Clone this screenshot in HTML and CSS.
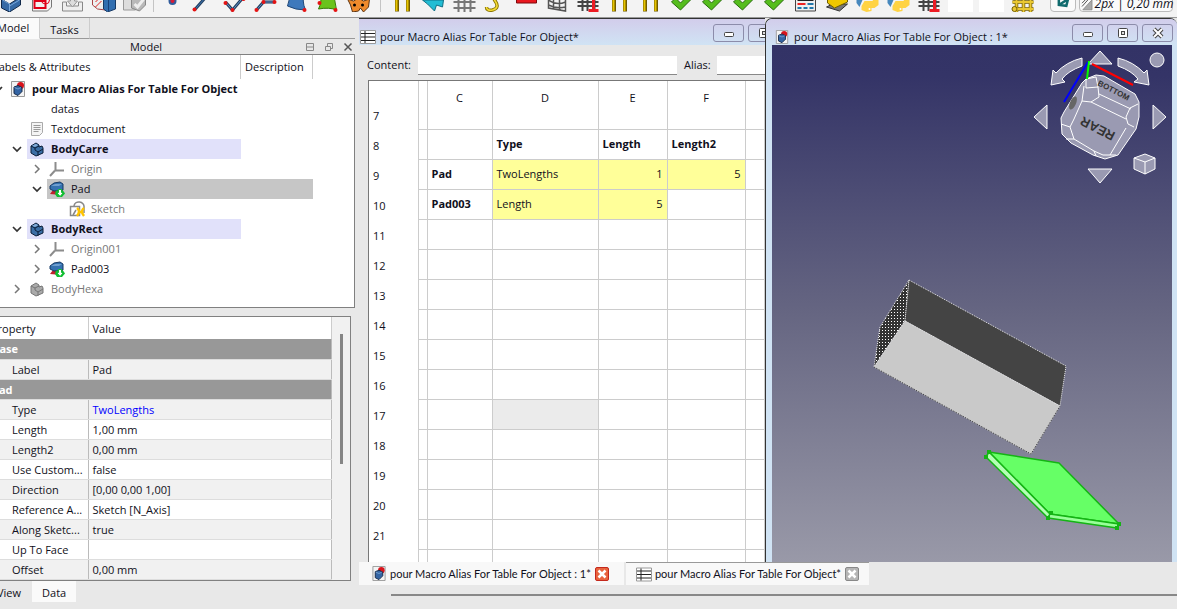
FILE: index.html
```html
<!DOCTYPE html>
<html lang="en">
<head>
<meta charset="utf-8">
<title>pour Macro Alias For Table For Object</title>
<link rel="stylesheet" href="styles.css">
</head>
<body>
<svg class="defs" aria-hidden="true">
  <symbol id="doc" viewBox="0 0 16 16"><path d="M1.500.5h13v15h-13z" fill="#f4f4f4" stroke="#999"/><circle cx="10.500" cy="4.500" r="3.500" fill="#d8141c"/><path d="M4 6l4-1.500 4 2v4l-4 4-4-2z" fill="#3465a4" stroke="#172a48"/><path d="M4.500 6.500l3.500 1.500 3-1.500" fill="none" stroke="#729fcf"/></symbol>
  <symbol id="sheet" viewBox="0 0 16 14"><path d="M.5.5h15v13H.5z" fill="#fff" stroke="#999"/><path d="M1 3.500h14M1 7h14M1 10.500h14M5 1v12" stroke="#222"/></symbol>
  <symbol id="body" viewBox="0 0 16 16"><path d="M2 5l5-3 3 2v2l3-1 1 2v5l-7 3-5-3z" fill="#3b6ea5" stroke="#0b1e38"/><path d="M2 5l4 2v2l3 2v4M9 11l5-3M6 7l4-2" fill="none" stroke="#0b1e38"/><path d="M3 4.800l4-2 2 1.500-3 1.700z" fill="#84acd8"/></symbol>
  <symbol id="bodygrey" viewBox="0 0 16 16"><path d="M2 5l5-3 3 2v2l3-1 1 2v5l-7 3-5-3z" fill="#aaa" stroke="#777"/><path d="M2 5l4 2v2l3 2v4M9 11l5-3M6 7l4-2" fill="none" stroke="#777"/></symbol>
  <symbol id="origin" viewBox="0 0 16 16"><path d="M6.500 1v8M6 9.500h9M6 9.500L1 15" fill="none" stroke="#8c8c8c" stroke-width="2"/></symbol>
  <symbol id="pad" viewBox="0 0 16 16"><path d="M1 13l3-4h10l-2 5z" fill="#c0202c"/><path d="M1 5l4-3 6-1 3 2v6l-9 1-4-2z" fill="#3572b0" stroke="#173a66"/><path d="M2 5l4-2 7 0-3 2z" fill="#6f9fd0"/><path d="M7 9.500h7l2 3-3 3.500H8l-2-3z" fill="#0fbe30"/><path d="M9.500 8.500h3v3h2l-3.400 4-3.600-4h2z" fill="#fff" stroke="#0fbe30"/></symbol>
  <symbol id="text" viewBox="0 0 16 16"><path d="M2.500 1.500h11v10l-3 3h-8z" fill="#f4f4f4" stroke="#aaa"/><path d="M4.500 4.500h7M4.500 6.500h7M4.500 8.500h7M4.500 10.500h5" stroke="#999"/></symbol>
  <symbol id="sketch" viewBox="0 0 16 16"><path d="M1.500 5.500h9v9h-9z" fill="none" stroke="#888" stroke-width="1.500"/><path d="M5 5a5 4.500 0 0 1 10 1v6M4 14l3-5" fill="none" stroke="#888" stroke-width="1.500"/><path d="M8 7q4 3 0 8M15 7q-4 3 0 8M10 11h4" fill="none" stroke="#ffc400" stroke-width="2.500"/></symbol>
  <symbol id="down" viewBox="0 0 10 10"><path d="M1 3l4 4 4-4" fill="none" stroke="#333" stroke-width="1.700"/></symbol>
  <symbol id="right" viewBox="0 0 10 10"><path d="M3 1l4 4-4 4" fill="none" stroke="#777" stroke-width="1.500"/></symbol>
  <symbol id="bars" viewBox="0 0 24 24"><path d="M6.500 0v23.500M17.500 0v23.500" stroke="#715b00" stroke-width="4"/><path d="M6 0v23M17 0v23" stroke="#e6c400" stroke-width="2"/></symbol>
  <symbol id="check" viewBox="0 0 24 24"><path d="M2 14l4-4 5 5L22 4v7L11 22z" fill="#55bd1d" stroke="#286b0c"/></symbol>
  <symbol id="python" viewBox="0 0 24 24"><path d="M1 4h14v8H7l-3 7-3-4z" fill="#4788bd"/><path d="M9 13h8l3-6 3 5v5l-4 3h-3v3l-5 1-5-2v-4z" fill="#ffd343"/><circle cx="14" cy="21" r="1" fill="#fff"/></symbol>
  <symbol id="gridred" viewBox="0 0 24 24"><path d="M1 14h21M1 18h21M6 5v18M11 5v18M18 5v18" stroke="#444" stroke-width="2"/><path d="M13 10h8M17 10v12M12 22.500h10" stroke="#ed1c24" stroke-width="3"/></symbol>
  <symbol id="min" viewBox="0 0 12 12"><rect x="1.500" y="5.500" width="9" height="4" rx="1" fill="#fff" stroke="#444"/></symbol>
  <symbol id="max" viewBox="0 0 12 12"><rect x="1.500" y="1.500" width="9" height="9" rx="1" fill="#fff" stroke="#444"/><rect x="4.500" y="4.500" width="3" height="3" fill="#ddd" stroke="#444"/></symbol>
  <symbol id="close" viewBox="0 0 12 12"><path d="M2 2l8 8M10 2l-8 8" stroke="#444" stroke-width="4"/><path d="M2 2l8 8M10 2l-8 8" stroke="#fff" stroke-width="2"/></symbol>
  <symbol id="tabx" viewBox="0 0 12 12"><path d="M2.500 2.500l7 7M9.500 2.500l-7 7" stroke="#fff" stroke-width="2.500"/></symbol>
</svg>

<div class="app">
  <header class="toolbar">
    <div class="group">
      <svg viewBox="0 0 24 24"><path d="M3 11l8 5 11-7v8l-11 7-8-4z" fill="#3569a5" stroke="#10294a"/><path d="M4 12l7 4v7M11 18l10-6" fill="none" stroke="#78a8dc"/></svg>
      <svg viewBox="0 0 24 24"><path d="M3 2h19v17l-4 4H3z" fill="#f2f2f2" stroke="#777"/><path d="M5 8h11v12H5zM5 13h11M12 4v7" fill="none" stroke="#e00018" stroke-width="2"/><circle cx="16" cy="12" r="4" fill="none" stroke="#e00018"/></svg>
      <svg viewBox="0 0 24 24"><path d="M2 14h4v4h12v-4h4v9H2z" fill="#eee" stroke="#888"/><path d="M12 19l-5-6h3V7h4v6h3z" fill="#ddd" stroke="#999"/></svg>
      <svg viewBox="0 0 24 24"><path d="M1 4h13v18l-8-1-5-4z" fill="#eee" stroke="#a44"/><path d="M4 14l5-5M4 19l6-6" stroke="#d22"/><path d="M12 9l6-3 6 3v12l-8 3-4-3z" fill="#316eb0" stroke="#173a66"/><path d="M17 8v15" stroke="#17407a"/></svg>
      <svg viewBox="0 0 24 24"><path d="M1 7h12v15H1z" fill="#ddd" stroke="#999"/><path d="M9 9l14-1v9l-6 6-8-3z" fill="#b9b9b9" stroke="#888"/><path d="M12 16l3 3 7-9" fill="none" stroke="#eee" stroke-width="3"/></svg>
    </div>
    <div class="group">
      <svg viewBox="0 0 24 24"><circle cx="12" cy="13" r="3" fill="#d81b35" stroke="#315c9c" stroke-width="2"/></svg>
      <svg viewBox="0 0 24 24"><path d="M3 22L17 6" stroke="#243f60" stroke-width="3"/><path d="M3 22L17 6" stroke="#3c79b8"/><circle cx="3" cy="21.500" r="2" fill="#e51313"/></svg>
      <svg viewBox="0 0 24 24"><path d="M3 14l7 8L21 9" fill="none" stroke="#243f60" stroke-width="3"/><path d="M3 14l7 8L21 9" fill="none" stroke="#5f93c8"/><circle cx="3" cy="15" r="2" fill="#e51313"/><circle cx="10" cy="22" r="2" fill="#e51313"/><circle cx="21" cy="11" r="2" fill="#e51313"/></svg>
      <svg viewBox="0 0 24 24"><path d="M3 22l7-8h11" fill="none" stroke="#243f60" stroke-width="3"/><path d="M3 22l7-8h11" fill="none" stroke="#5f93c8"/><circle cx="3" cy="22" r="2" fill="#e51313"/><circle cx="10" cy="14" r="2" fill="#e51313"/><circle cx="21" cy="14" r="2" fill="#e51313"/></svg>
      <svg viewBox="0 0 24 24"><path d="M4 4h16q-3 9 1 18-10 0-18-4 3-6 1-14z" fill="#3e79bc" stroke="#1e4778"/><circle cx="20" cy="22" r="2" fill="#e51313"/></svg>
      <svg viewBox="0 0 24 24"><path d="M6 3h14q-2 9 1 19-7-3-18-1 3-6 3-18z" fill="#6ac31c" stroke="#367a09"/><circle cx="20" cy="22" r="2" fill="#e51313"/><circle cx="4" cy="15" r="2" fill="#e51313"/></svg>
      <svg viewBox="0 0 24 24"><path d="M1 11l6 2 5-3 5 3 6-2-1 8-5 5-3-4-2 3-6 1-2-7z" fill="#ee8a2c" stroke="#5d3412"/><circle cx="8" cy="17" r="1.500"/><circle cx="16" cy="17" r="1.500"/></svg>
    </div>
    <div class="group">
      <svg><use href="#bars"/></svg>
      <svg viewBox="0 0 24 24"><path d="M1 12h21l-1 7-6-2-2 6-4-4-3-3z" fill="#22bdd4" stroke="#107085"/></svg>
      <svg viewBox="0 0 24 24"><path d="M1 14h22M1 20h22M6 6v18M12 6v18M18 6v18" stroke="#777" stroke-width="2"/></svg>
      <svg viewBox="0 0 24 24"><path d="M19 5q-10-1-8 7 6 8-2 10-6 1-6-3" fill="none" stroke="#8b7600" stroke-width="3.500"/><path d="M19 5q-10-1-8 7 6 8-2 10-6 1-6-3" fill="none" stroke="#f5dc35" stroke-width="1.500"/></svg>
      <svg viewBox="0 0 24 24"><path d="M2 6h20v9H2z" fill="#e9181e" stroke="#7c080c"/></svg>
      <svg viewBox="0 0 24 24"><path d="M3 5v15l17 3V8M3 12q8 6 17 2M3 17q8 4 17 2M8 6v15M14 8v14" fill="none" stroke="#555" stroke-width="1.500"/></svg>
      <svg><use href="#gridred"/></svg>
      <svg><use href="#bars"/></svg>
      <svg><use href="#bars"/></svg>
      <svg><use href="#check"/></svg>
      <svg><use href="#check"/></svg>
      <svg><use href="#check"/></svg>
      <svg><use href="#check"/></svg>
      <svg viewBox="0 0 24 24"><path d="M2 3h20v20H2z" fill="#eee" stroke="#444"/><path d="M4 12h16" stroke="#222" stroke-width="2"/><path d="M4 16h8" stroke="#e22" stroke-width="2"/><path d="M14 16h6" stroke="#27a" stroke-width="2"/><path d="M4 20h16" stroke="#27a" stroke-width="2" stroke-dasharray="4 2"/></svg>
      <svg viewBox="0 0 24 24"><path d="M2 19l6-3h15l-8 7z" fill="#777" stroke="#333"/><path d="M3 15l7 5 13-6V9H3z" fill="#f0c800" stroke="#705f00"/></svg>
      <svg><use href="#python"/></svg>
      <svg><use href="#python"/></svg>
      <svg><use href="#gridred"/></svg>
      <i class="blank"></i>
      <i class="blank"></i>
      <svg viewBox="0 0 24 24"><path d="M2 14h21M2 21h21M6 9v15M13 9v15M20 9v15" stroke="#776000" stroke-width="3.500"/><path d="M2 14h21M2 21h21M6 9v15M13 9v15M20 9v15" stroke="#eac832" stroke-width="2"/><circle cx="4" cy="21" r="2.500" fill="#eac832" stroke="#776000"/></svg>
    </div>
    <button class="tool" aria-label="Plane"><svg viewBox="0 0 24 24"><path d="M7 18l11-7M7 7v11l9 1 2-8" fill="none" stroke="#116b6e" stroke-width="3"/></svg></button>
    <button class="tool pen"><svg viewBox="0 0 16 24"><path d="M3 19h11V7z" fill="#aaa" stroke="#888"/><path d="M2 15l8-9M2 11l6-6" stroke="#333"/></svg>2px | 0,20 mm</button>
  </header>

  <div class="main">
    <aside class="dock">
      <div class="tabs"><button class="tab on">Model</button><button class="tab">Tasks</button></div>
      <div class="dock-title"><span>Model</span>
        <button aria-label="Dock"><svg viewBox="0 0 10 10"><path d="M1.500 1.500h7v7h-7zM1 5h8" fill="none" stroke="#888"/></svg></button>
        <button aria-label="Float"><svg viewBox="0 0 10 10"><path d="M1.500 4.500h5v4h-5zM3.500 4V1.500h5v5H7" fill="none" stroke="#888"/></svg></button>
        <button aria-label="Close"><svg viewBox="0 0 10 10"><path d="M1.500 1.500l7 7M8.500 1.500l-7 7" stroke="#555" stroke-width="1.500"/></svg></button>
      </div>
      <div class="tree">
        <div class="tree-head"><span>Labels &amp; Attributes</span><span>Description</span></div>
        <ul>
          <li class="l0"><button aria-label="Collapse"><svg><use href="#down"/></svg></button><svg class="ico"><use href="#doc"/></svg><b>pour Macro Alias For Table For Object</b></li>
          <li class="l1"><i class="ico"></i><span>datas</span></li>
          <li class="l1"><svg class="ico"><use href="#text"/></svg><span>Textdocument</span></li>
          <li class="l1"><button aria-label="Collapse"><svg><use href="#down"/></svg></button><div class="hl"><svg class="ico"><use href="#body"/></svg><b>BodyCarre</b></div></li>
          <li class="l2 dim"><button aria-label="Expand"><svg><use href="#right"/></svg></button><svg class="ico"><use href="#origin"/></svg><span>Origin</span></li>
          <li class="l2"><button aria-label="Collapse"><svg><use href="#down"/></svg></button><div class="sel"><svg class="ico"><use href="#pad"/></svg><span>Pad</span></div></li>
          <li class="l3 dim"><svg class="ico"><use href="#sketch"/></svg><span>Sketch</span></li>
          <li class="l1"><button aria-label="Collapse"><svg><use href="#down"/></svg></button><div class="hl"><svg class="ico"><use href="#body"/></svg><b>BodyRect</b></div></li>
          <li class="l2 dim"><button aria-label="Expand"><svg><use href="#right"/></svg></button><svg class="ico"><use href="#origin"/></svg><span>Origin001</span></li>
          <li class="l2"><button aria-label="Expand"><svg><use href="#right"/></svg></button><svg class="ico"><use href="#pad"/></svg><span>Pad003</span></li>
          <li class="l1 dim"><button aria-label="Expand"><svg><use href="#right"/></svg></button><svg class="ico"><use href="#bodygrey"/></svg><span>BodyHexa</span></li>
        </ul>
      </div>
      <div class="props">
        <table>
          <colgroup><col class="c-name"><col></colgroup>
          <thead><tr><th>Property</th><th>Value</th></tr></thead>
          <tbody>
            <tr class="grp"><td colspan="2">Base</td></tr>
            <tr class="alt"><td>Label</td><td>Pad</td></tr>
            <tr class="grp"><td colspan="2">Pad</td></tr>
            <tr class="alt"><td>Type</td><td class="blue">TwoLengths</td></tr>
            <tr><td>Length</td><td>1,00 mm</td></tr>
            <tr class="alt"><td>Length2</td><td>0,00 mm</td></tr>
            <tr><td>Use Custom...</td><td>false</td></tr>
            <tr class="alt"><td>Direction</td><td>[0,00 0,00 1,00]</td></tr>
            <tr><td>Reference A...</td><td>Sketch [N_Axis]</td></tr>
            <tr class="alt"><td>Along Sketc...</td><td>true</td></tr>
            <tr><td>Up To Face</td><td></td></tr>
            <tr class="alt"><td>Offset</td><td>0,00 mm</td></tr>
          </tbody>
        </table>
        <div class="scroll"><div class="thumb"></div></div>
      </div>
      <div class="tabs bottom"><button class="tab">View</button><button class="tab on">Data</button></div>
    </aside>

    <section class="mdi">
      <div class="windows">
        <article class="win sheetwin">
          <div class="titlebar"><svg class="ico"><use href="#sheet"/></svg><h2>pour Macro Alias For Table For Object*</h2>
            <button aria-label="Minimize"><svg><use href="#min"/></svg></button><button aria-label="Maximize"><svg><use href="#max"/></svg></button></div>
          <div class="fields"><label for="content">Content:</label><input id="content" type="text"><label for="alias">Alias:</label><input id="alias" class="alias" type="text"></div>
          <div class="grid">
            <table>
              <colgroup><col class="w-h"><col class="w-b"><col class="w-c"><col class="w-d"><col class="w-e"><col class="w-f"><col></colgroup>
              <thead><tr><th></th><th></th><th>C</th><th>D</th><th>E</th><th>F</th><th></th></tr></thead>
              <tbody>
                <tr class="first"><th>7</th><td></td><td></td><td></td><td></td><td></td><td></td></tr>
                <tr><th>8</th><td></td><td></td><td class="bold">Type</td><td class="bold">Length</td><td class="bold">Length2</td><td></td></tr>
                <tr><th>9</th><td></td><td class="bold">Pad</td><td class="y">TwoLengths</td><td class="y num">1</td><td class="y num">5</td><td></td></tr>
                <tr><th>10</th><td></td><td class="bold">Pad003</td><td class="y">Length</td><td class="y num">5</td><td></td><td></td></tr>
                <tr><th>11</th><td></td><td></td><td></td><td></td><td></td><td></td></tr>
                <tr><th>12</th><td></td><td></td><td></td><td></td><td></td><td></td></tr>
                <tr><th>13</th><td></td><td></td><td></td><td></td><td></td><td></td></tr>
                <tr><th>14</th><td></td><td></td><td></td><td></td><td></td><td></td></tr>
                <tr><th>15</th><td></td><td></td><td></td><td></td><td></td><td></td></tr>
                <tr><th>16</th><td></td><td></td><td></td><td></td><td></td><td></td></tr>
                <tr><th>17</th><td></td><td></td><td class="cur"></td><td></td><td></td><td></td></tr>
                <tr><th>18</th><td></td><td></td><td></td><td></td><td></td><td></td></tr>
                <tr><th>19</th><td></td><td></td><td></td><td></td><td></td><td></td></tr>
                <tr><th>20</th><td></td><td></td><td></td><td></td><td></td><td></td></tr>
                <tr><th>21</th><td></td><td></td><td></td><td></td><td></td><td></td></tr>
                <tr class="last"><th></th><td></td><td></td><td></td><td></td><td></td><td></td></tr>
              </tbody>
            </table>
          </div>
        </article>
        <article class="win viewwin">
          <div class="titlebar"><svg class="ico"><use href="#doc"/></svg><h2>pour Macro Alias For Table For Object : 1*</h2>
            <button aria-label="Minimize"><svg><use href="#min"/></svg></button><button aria-label="Maximize"><svg><use href="#max"/></svg></button><button aria-label="Close"><svg><use href="#close"/></svg></button></div>
          <div class="scene">
            <svg viewBox="772 45 400 517" preserveAspectRatio="xMaxYMin slice">
              <defs><pattern id="mesh" width="3" height="3" patternUnits="userSpaceOnUse"><path d="M0 0h3v3H0z" fill="#333"/><path d="M0 0h1v1H0z" fill="#fff"/></pattern></defs>
              <g stroke="#eee" stroke-dasharray="1 1" stroke-linejoin="round">
                <path d="M909 280L905 321 874 367 880 327z" fill="url(#mesh)"/>
                <path d="M909 280L1066 366 1060 406 905 321z" fill="#444"/>
                <path d="M905 321L1060 406 1031 454 874 367z" fill="#c9c9c9"/>
              </g>
              <path d="M874 367L1031 454 1060 406" fill="none" stroke="#333" stroke-dasharray="1 1"/>
              <g stroke="#14b414" stroke-width="1.500" stroke-linejoin="round">
                <path d="M989 452L1059 463 1119 524 1050 514z" fill="#66ff66"/>
                <path d="M989 452L1050 514 1048 518 986 457z" fill="#b4ffb4"/>
                <path d="M1050 514L1119 524 1117 528 1048 518z" fill="#99ff99"/>
              </g>
              <path d="M987 450h4v4h-4zM984 455h4v4h-4zM1049 511h4v4h-4zM1046 516h4v4h-4zM1117 522h4v4h-4zM1115 526h4v4h-4z" fill="#14b414"/>
              <g fill="#9a9ab2" stroke="#fff" stroke-linejoin="round">
                <path d="M1100 51l12 13h-24zM1100 183l12-14h-24zM1034 117l13-12v24zM1166 117l-13-12v24z"/>
                <circle cx="1157" cy="60" r="7"/>
                <path d="M1082 58v8q-14 5-20 13l3 3-14 3 2-15 3 3q10-11 26-15z"/>
                <path d="M1118 58v8q14 5 20 13l-4 3 15 3-2-15-3 3q-10-11-26-15z"/>
                <path d="M1145 154l10 4v11l-10 5-11-5v-11z"/><path d="M1134 158l11 4 10-4M1145 162v12" fill="none"/>
                <path d="M1086 79L1096 75 1104 76 1135 94 1139 102 1139 117 1136 129 1118 155 1105 159 1093 155 1071 143 1062 134 1061 118 1064 112 1082 83z"/>
                <path d="M1086 79L1096 77 1098 87 1086 88zM1098 87L1099 97 1091 102 1082 101 1074 119 1070 127 1061 124M1082 101L1084 86M1091 102L1126 119M1099 94L1131 109M1070 127L1074 139 1094 151 1103 155 1110 155 1126 128M1126 117L1130 108 1138 104M1126 117L1128 124 1134 127M1074 139L1066 139M1094 151L1096 156M1110 155L1116 155" fill="none"/>
                <ellipse cx="1073" cy="103" rx="3" ry="7" fill="#666" stroke="none" transform="rotate(24 1073 103)"/>
              </g>
              <text class="face" transform="translate(1116 133) rotate(207)">REAR</text>
              <text class="face small" transform="translate(1097 85) rotate(27)">BOTTOM</text>
              <path d="M1088 62L1064 102" stroke="#00f" stroke-width="2"/>
              <path d="M1089 61L1087 79" stroke="#0f0" stroke-width="2"/>
              <path d="M1092 64L1133 85" stroke="#f00" stroke-width="2"/>
            </svg>
          </div>
        </article>
      </div>
      <div class="mditabs">
        <div class="mditab on"><svg class="ico"><use href="#doc"/></svg><span>pour Macro Alias For Table For Object : 1*</span><button class="x red" aria-label="Close tab"><svg><use href="#tabx"/></svg></button></div>
        <div class="mditab"><svg class="ico"><use href="#sheet"/></svg><span>pour Macro Alias For Table For Object*</span><button class="x" aria-label="Close tab"><svg><use href="#tabx"/></svg></button></div>
      </div>
      <hr>
    </section>
  </div>
</div>
</body>
</html>
```

FILE: styles.css
```css
* { box-sizing: border-box; }
body { margin: 0; overflow: hidden; background: #e8e8e8; color: #101020; font: 11px/20px "Open Sans", "Noto Sans", sans-serif; }
button { margin: 0; padding: 0; border: 0; background: none; color: inherit; font: inherit; display: flex; align-items: center; justify-content: center; }
svg { display: block; flex: none; }
table { border-collapse: collapse; table-layout: fixed; width: 100%; }
ul { list-style: none; margin: 0; padding: 0; }
h2 { margin: 0; font: inherit; white-space: nowrap; flex: 1; }
.defs { position: absolute; width: 0; height: 0; }
.ico { width: 16px; height: 16px; flex: none; }

.app { margin-left: -20px; min-height: 100vh; display: flex; flex-direction: column; }

.toolbar { height: 18px; padding: 0 4px 5px 15px; display: flex; align-items: flex-end; overflow: hidden; border-bottom: 1px solid #999; background: #f3f3f3; }
.group { display: flex; align-items: flex-end; }
.group + .group { margin-left: 3px; padding-left: 3px; border-left: 1px solid #c4c4c4; }
.group + .group + .group { margin-left: 6px; padding-left: 6px; }
.group > * { width: 31px; height: 24px; padding: 0 3px; flex: none; }
.group .blank { height: 24px; background: #fff; background-clip: content-box; }
.tool { height: 24px; width: 26px; background: #fafafa; border: 1px solid #bbb; border-radius: 4px; margin-left: 12px; flex: none; }
.tool svg { width: 20px; height: 22px; }
.tool.pen { flex: 1; margin-left: 3px; font-style: italic; font-size: 12px; white-space: nowrap; padding: 7px 0 0; }
.tool.pen svg { width: 16px; height: 20px; }

.main { display: flex; flex: 1; }
.dock { width: 379px; flex: none; padding-right: 4px; }
.tabs { display: flex; height: 21px; }
.tabs .tab { height: 21px; padding: 3px 10px 0; border-right: 1px solid #ccc; border-bottom: 1px solid #999; }
.tabs .tab.on { background: #fafafa; border-bottom-color: #fafafa; }
.tabs:not(.bottom)::after { content: ""; flex: 1; border-bottom: 1px solid #999; }
.tabs:not(.bottom) .tab.on { padding: 0 10px 0 17px; }
.bottom .tab { border: 0; padding: 3px 8px 0 17px; }
.bottom .tab.on { padding: 3px 10px 0; margin-left: 3px; }
.dock-title { display: flex; height: 15px; align-items: center; gap: 9px; padding-right: 2px; line-height: 15px; }
.dock-title span { flex: 1; text-align: center; padding-left: 16px; }
.dock-title button, .dock-title svg { width: 10px; height: 10px; }

.tree { background: #fff; border: 1px solid #808080; padding-bottom: 8px; }
.tree-head { display: flex; height: 24px; line-height: 23px; }
.tree-head span { padding-left: 12px; width: 260px; border-right: 1px solid #ccc; }
.tree-head span + span { width: 72px; padding-left: 4px; }
.tree li { display: flex; align-items: center; height: 20px; white-space: nowrap; }
.tree li button { width: 20px; height: 20px; }
.tree li button svg { width: 10px; height: 10px; }
.tree .ico { margin: 0 6px 0 2px; }
.tree b { font-weight: 700; }
.l0 { padding-left: 7px; }
.l1 { padding-left: 46px; }
.l1:has(button) { padding-left: 26px; }
.l2 { padding-left: 46px; }
.l3 { padding-left: 86px; }
.dim { color: #777; }
.hl, .sel { display: flex; align-items: center; height: 20px; width: 214px; background: #e1e1fa; }
.sel { width: 266px; background: #c6c6c6; }

.props { display: flex; margin: 8px 4px 0 0; background: #fff; border: 1px solid #808080; }
.props table { flex: 1; width: 0; }
.c-name { width: 107px; }
.props th { height: 22px; padding: 1px 0 0 10px; text-align: left; font-weight: 400; border-right: 1px solid #ccc; }
.props th + th { padding-left: 4px; }
.props td { height: 20px; line-height: 19px; padding: 0 0 0 31px; white-space: nowrap; border-right: 1px solid #bbb; border-bottom: 1px solid #ddd; }
.props td + td { padding-left: 4px; }
.props .alt td { background: #f1f1f1; }
.props .grp td { background: #989898; color: #fff; font-weight: 700; padding-left: 11px; }
.props .blue { color: #00f; }
.scroll { width: 18px; background: #f1f1f1; padding: 17px 7px 0 8px; }
.thumb { width: 3px; height: 130px; background: #858585; }

.mdi { flex: 1; min-width: 0; display: flex; flex-direction: column; }
.windows { display: flex; align-items: stretch; }
.win { border-top: 1px solid #333; min-width: 0; display: flex; flex-direction: column; }
.titlebar { height: 26px; flex: none; display: flex; align-items: center; gap: 4px; padding: 10px 0 0 1px; background: linear-gradient(#d2cdeb, #d0e3f4); }
.titlebar .ico { height: 14px; }
.titlebar h2 { line-height: 16px; }
.titlebar button { width: 31px; height: 18px; flex: none; margin: -8px 0 0 0; border: 1px solid #8c8caa; border-radius: 3px; }
.titlebar button svg { width: 12px; height: 12px; }
.sheetwin { width: 406px; flex: none; overflow: hidden; }
.sheetwin .titlebar button:last-child { margin-right: -14px; }
.fields { display: flex; align-items: center; height: 35px; flex: none; padding: 5px 0 0 8px; }
.fields label { width: 51px; }
.fields input { flex: 1; min-width: 0; height: 19px; border: 0; border-bottom: 1px solid #888; background: #fff; font: inherit; margin-right: 7px; }
.fields label + input + label { width: 33px; }
.fields .alias { flex: none; width: 48px; margin: 0; }
.grid { flex: 1; margin-left: 9px; background: #fff; border: 1px solid #777; border-width: 1px 0 0 1px; }
.grid td, .grid th { height: 30px; padding: 0 4px; font-weight: 400; white-space: nowrap; border-right: 1px solid #ccc; border-bottom: 1px solid #ccc; }
.grid thead th { height: 29px; border-bottom: 0; padding-top: 4px; }
.grid tbody th { text-align: left; border-bottom: 0; padding-top: 3px; }
.grid .first th, .grid .first td { height: 19px; line-height: 11px; padding-top: 0; vertical-align: top; }
.grid .last th, .grid .last td { height: 13px; border-bottom: 0; }
.grid td.bold { font-weight: 700; }
.grid td.y { background: #ffff99; }
.grid td.num { text-align: right; }
.grid td.cur { background: #ebebeb; }
.w-h { width: 49px; } .w-b { width: 9px; } .w-c { width: 65px; } .w-d { width: 106px; } .w-e { width: 69px; } .w-f { width: 78px; }

.viewwin { flex: 1; border-left: 1px solid #333; border-radius: 7px 7px 0 0; background: #d0e3f4; padding: 0 5px 0 6px; overflow: hidden; }
.viewwin .titlebar { margin: 0 -5px 0 -6px; padding-left: 8px; padding-right: 4px; }
.scene { flex: 1; position: relative; background: linear-gradient(#333366, #343467 6%, #666682 52%, #9999a8); }
.scene svg { position: absolute; inset: 0; width: 100%; height: 100%; }
.face { font: 700 13px "Liberation Sans", sans-serif; fill: #333; }
.face.small { font-size: 8px; }

.mditabs { display: flex; gap: 2px; height: 23px; font-family: Lato, "Open Sans", sans-serif; }
.mditab { display: flex; align-items: center; gap: 3px; padding: 0 15px 0 12px; background: #f8f8f8; white-space: nowrap; }
.mditab + .mditab { padding: 0 10px; border-top: 1px solid #999; }
.mditab .ico { height: 15px; }
.x { width: 14px; height: 14px; border: 1px solid #888; border-radius: 2px; background: #b5b5b5; margin-left: 1px; }
.x.red { background: #e8633e; border-color: #c4281c; }
.x svg { width: 12px; height: 12px; }
hr { width: calc(100% - 32px); height: 2px; border: 0; background: #888; margin: 9px 0 0 32px; }
```
